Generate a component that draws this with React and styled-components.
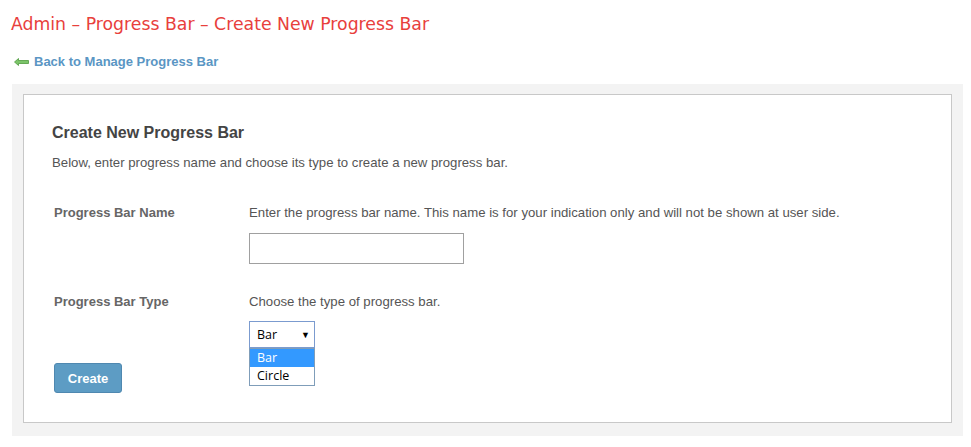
import React, { useState } from 'react';
import styled, { createGlobalStyle } from 'styled-components';

const GlobalStyle = createGlobalStyle`
  body {
    margin: 0;
    background: #fff;
    font-family: 'Liberation Sans', Arial, sans-serif;
  }
`;

const Page = styled.div`
  padding: 12px 8px 0 12px;
`;

const Title = styled.h1`
  margin: 0;
  font-family: 'DejaVu Sans', sans-serif;
  font-weight: normal;
  font-size: 17.3px;
  line-height: 24px;
  color: #e8403c;
  margin-left: -1px;
`;

const BackLink = styled.a`
  display: inline-flex;
  align-items: center;
  gap: 5px;
  margin-top: 18px;
  margin-left: 2px;
  font-size: 13px;
  font-weight: bold;
  line-height: 16px;
  color: #5a96c4;
  text-decoration: none;
  cursor: pointer;
`;

const Panel = styled.div`
  margin-top: 14px;
  width: 951px;
  box-sizing: border-box;
  background: #f3f3f3;
  padding: 10px 11px 13px 11px;
`;

const Card = styled.div`
  background: #fff;
  border: 1px solid #c8c8c8;
  padding: 29px 28px 29px 28px;
`;

const Heading = styled.h2`
  margin: 0;
  font-size: 16px;
  line-height: 18px;
  font-weight: bold;
  color: #444;
`;

const Text = styled.p`
  margin: ${({ top }) => top || 0} 0 0 0;
  font-size: 13.2px;
  line-height: 18px;
  color: #555;
`;

const Row = styled.div`
  display: grid;
  grid-template-columns: 197px 1fr;
  margin-top: ${({ top }) => top};
`;

const Label = styled.div`
  padding-left: 2px;
  font-size: 13px;
  line-height: 18px;
  font-weight: bold;
  color: #666;
`;

const Field = styled.div`
  display: flex;
  flex-direction: column;
  align-items: flex-start;
`;

const Input = styled.input`
  margin-top: 11px;
  width: 215px;
  height: 31px;
  box-sizing: border-box;
  border: 1px solid #a0a0a0;
  outline: none;
  padding: 0 6px;
  font-size: 13px;
`;

const SelectWrap = styled.div`
  position: relative;
  margin-top: 10px;
  font-family: 'Open Sans', 'Noto Sans', sans-serif;
  font-size: 12.5px;
`;

const SelectBox = styled.div`
  width: 66px;
  height: 27px;
  box-sizing: border-box;
  border: 1px solid #7b9bcf;
  display: flex;
  align-items: center;
  justify-content: space-between;
  padding: 0 4px 0 7px;
  color: #000;
  background: #fff;
`;

const Caret = styled.span`
  font-size: 9px;
  line-height: 1;
`;

const Options = styled.div`
  position: absolute;
  left: 0;
  top: 27px;
  width: 66px;
  box-sizing: border-box;
  border: 1px solid #7f9db9;
  background: #fff;
`;

const Option = styled.div`
  height: 18px;
  line-height: 18px;
  padding-left: 7px;
  background: ${({ active }) => (active ? '#3399ff' : '#fff')};
  color: ${({ active }) => (active ? '#fff' : '#000')};
`;

const Button = styled.button`
  margin-top: 15px;
  margin-left: 2px;
  width: 68px;
  height: 30px;
  border: 1px solid #4f88b0;
  border-radius: 3px;
  background: #5d9cc4;
  color: #fff;
  font-family: 'Liberation Sans', Arial, sans-serif;
  font-size: 13px;
  font-weight: bold;
  cursor: pointer;
`;

const BackArrow = () => (
  <svg width="15" height="8" viewBox="0 0 15 8">
    <path d="M0.5 4 L4.5 0.5 L4.5 2.5 L14.5 2.5 L14.5 5.5 L4.5 5.5 L4.5 7.5 Z" fill="#7cc46a" stroke="#4f9a3d" strokeWidth="0.8" />
  </svg>
);

export default function App() {
  const [type, setType] = useState('Bar');
  return (
    <>
      <GlobalStyle />
      <Page>
        <Title>Admin – Progress Bar – Create New Progress Bar</Title>
        <BackLink>
          <BackArrow />
          Back to Manage Progress Bar
        </BackLink>
        <Panel>
          <Card>
            <Heading>Create New Progress Bar</Heading>
            <Text top="12px">Below, enter progress name and choose its type to create a new progress bar.</Text>
            <Row top="32px">
              <Label>Progress Bar Name</Label>
              <Field>
                <Text>Enter the progress bar name. This name is for your indication only and will not be shown at user side.</Text>
                <Input type="text" />
              </Field>
            </Row>
            <Row top="29px">
              <Label>Progress Bar Type</Label>
              <Field>
                <Text>Choose the type of progress bar.</Text>
                <SelectWrap>
                  <SelectBox>
                    {type}
                    <Caret>▼</Caret>
                  </SelectBox>
                  <Options>
                    {['Bar', 'Circle'].map((o) => (
                      <Option key={o} active={o === type} onClick={() => setType(o)}>
                        {o}
                      </Option>
                    ))}
                  </Options>
                </SelectWrap>
              </Field>
            </Row>
            <Button>Create</Button>
          </Card>
        </Panel>
      </Page>
    </>
  );
}
